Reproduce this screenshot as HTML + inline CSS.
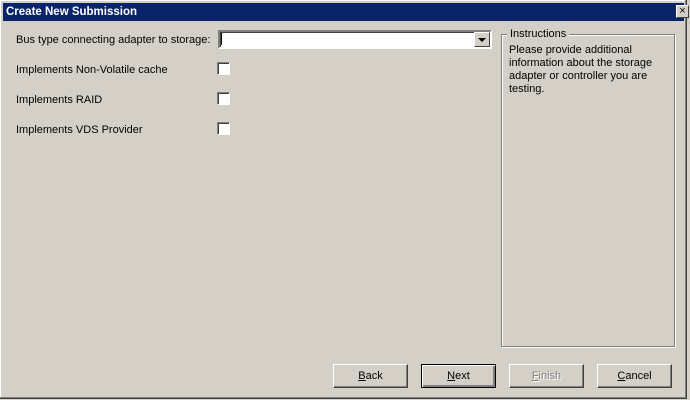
<!DOCTYPE html>
<html><head><style>
body{margin:0;width:690px;height:400px;background:#d4d0c8;position:relative;overflow:hidden;font-family:"Liberation Sans",sans-serif;font-size:11px;color:#000}
.a{position:absolute}
.win{left:0;top:0;width:686px;height:398px;border-right:1px solid #404040;border-bottom:1px solid #404040;box-shadow:inset -1px -1px #808080,inset 1px 1px #fff}
.title{left:3px;top:3px;width:681px;height:18px;background:#0a246a;color:#fff;font-weight:bold;font-size:11.5px;line-height:18px}
.close{left:673px;top:2px;width:11px;height:11px;background:#d4d0c8;border:1px solid;border-color:#fff #404040 #404040 #fff;font-size:11px;line-height:11px;text-align:center;color:#000;font-weight:normal}
.chk{width:11px;height:11px;background:#fff;border:1px solid;border-color:#808080 #fff #fff #808080;box-shadow:inset 1px 1px #404040}
.btn{top:364px;width:73px;height:22px;border:1px solid;border-color:#fff #404040 #404040 #fff;box-shadow:inset -1px -1px #808080;text-align:center;line-height:22px;font-size:11px}
.l{font-size:11px}
</style></head><body>
<div class="a win"></div>
<div class="a title"><span style="padding-left:3px">Create New Submission</span>
<div class="a close">×</div></div>
<div class="a l" style="left:16px;top:34px">Bus type connecting adapter to storage:</div>
<div class="a" style="left:218px;top:30px;width:270px;height:15px;background:#fff;border:2px solid;border-color:#808080 #fff #fff #808080;box-shadow:inset 1px 1px #404040"></div>
<div class="a" style="left:221px;top:33px;width:1px;height:12px;background:#000"></div>
<div class="a" style="left:474px;top:32px;width:14px;height:13px;background:#d4d0c8;border:1px solid;border-color:#fff #404040 #404040 #fff"><div class="a" style="left:3px;top:5px;width:0;height:0;border-left:4px solid transparent;border-right:4px solid transparent;border-top:4px solid #000"></div></div>
<div class="a l" style="left:16px;top:64px">Implements Non-Volatile cache</div>
<div class="a chk" style="left:217px;top:62px"></div>
<div class="a l" style="left:16px;top:94px">Implements RAID</div>
<div class="a chk" style="left:217px;top:92px"></div>
<div class="a l" style="left:16px;top:124px">Implements VDS Provider</div>
<div class="a chk" style="left:217px;top:122px"></div>
<div class="a" style="left:501px;top:34px;width:172px;height:311px;border:1px solid #808080;box-shadow:1px 1px #fff,inset 1px 1px #fff"></div>
<div class="a l" style="left:507px;top:28px;background:#d4d0c8;padding:0 3px">Instructions</div>
<div class="a l" style="left:509px;top:44px;width:160px;line-height:13px">Please provide additional information about the storage adapter or controller you are testing.</div>
<div class="a btn" style="left:333px"><u>B</u>ack</div>
<div class="a btn" style="left:421px;border-color:#000;box-shadow:inset 1px 1px #fff,inset -2px -2px #808080"><u>N</u>ext</div>
<div class="a btn" style="left:509px;color:#808080;text-shadow:1px 1px #fff"><u>F</u>inish</div>
<div class="a btn" style="left:597px"><u>C</u>ancel</div>
</body></html>
